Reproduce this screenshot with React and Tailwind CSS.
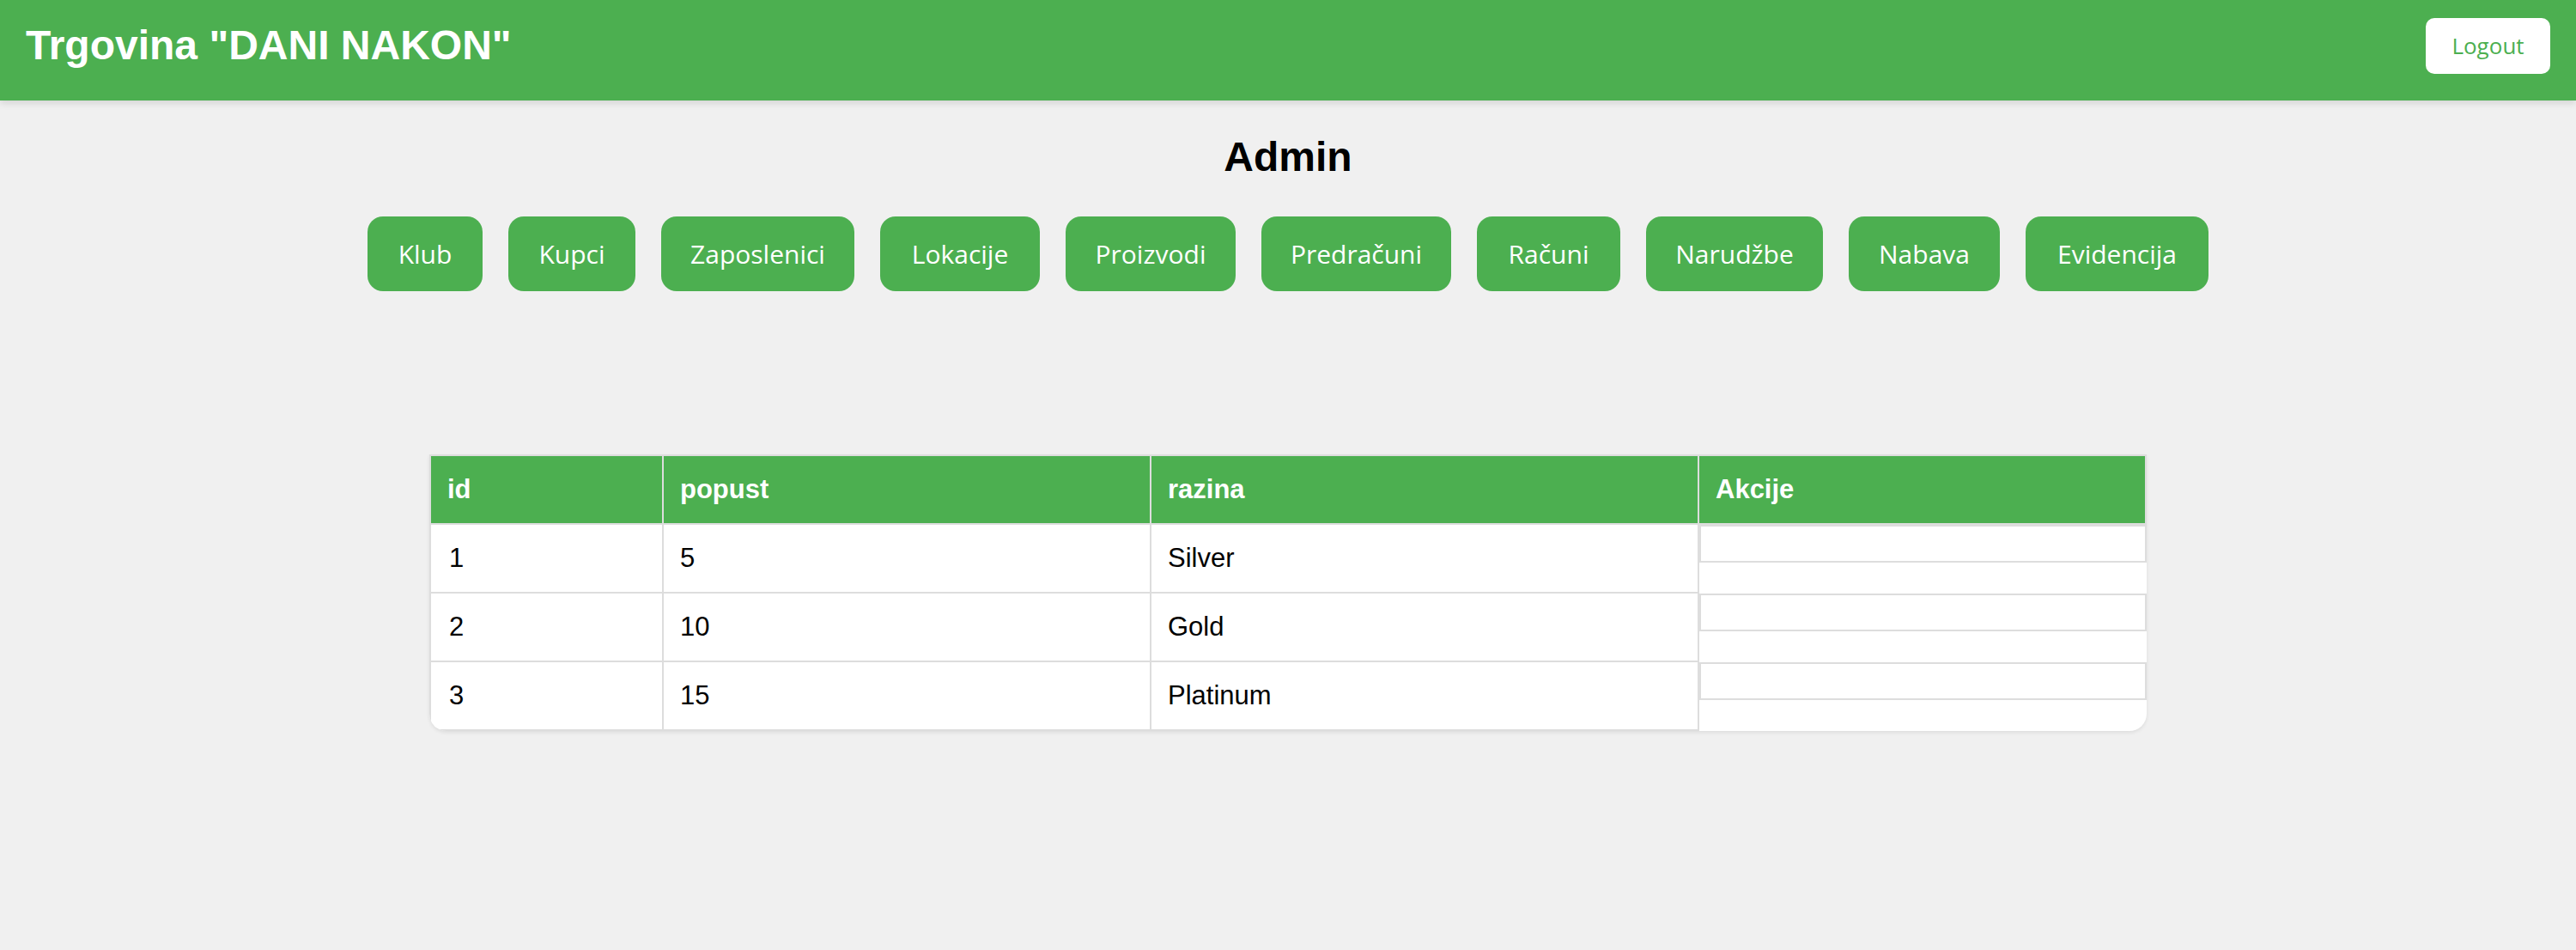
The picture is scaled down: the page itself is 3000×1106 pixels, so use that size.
import React from 'react';

const navItems = [
  { label: 'Klub', width: 'w-[134px]' },
  { label: 'Kupci', width: 'w-[148px]' },
  { label: 'Zaposlenici', width: 'w-[225px]' },
  { label: 'Lokacije', width: 'w-[186px]' },
  { label: 'Proizvodi', width: 'w-[198px]' },
  { label: 'Predračuni', width: 'w-[221px]' },
  { label: 'Računi', width: 'w-[167px]' },
  { label: 'Narudžbe', width: 'w-[206px]' },
  { label: 'Nabava', width: 'w-[176px]' },
  { label: 'Evidencija', width: 'w-[213px]' },
];

const rows = [
  { id: 1, popust: 5, razina: 'Silver' },
  { id: 2, popust: 10, razina: 'Gold' },
  { id: 3, popust: 15, razina: 'Platinum' },
];

const App = () => {
  return (
    <div className="min-h-screen bg-[#f0f0f0] font-['Liberation_Sans',Arial,sans-serif]">
      {/* top bar */}
      <header className="h-[117px] bg-[#4caf50] px-[30px] pb-[11px] flex items-center justify-between shadow-[0_3px_8px_rgba(0,0,0,0.12)] relative">
        <h1 className="text-white font-bold text-[48px] leading-none m-0">Trgovina "DANI NAKON"</h1>
        <button className="w-[145px] h-[65px] bg-white rounded-[10px] text-[#4caf50] text-[26px] font-['Open_Sans',sans-serif] flex items-center justify-center">
          Logout
        </button>
      </header>

      <main className="pt-[38px] flex flex-col items-center">
        <h2 className="text-black font-bold text-[48px] leading-[56px]">Admin</h2>

        <nav className="mt-[41px] flex justify-center gap-[30px]">
          {navItems.map((item) => (
            <button
              key={item.label}
              className={`${item.width} h-[87px] bg-[#4caf50] text-white rounded-[18px] text-[30px] font-['Open_Sans',sans-serif] flex items-center justify-center`}
            >
              {item.label}
            </button>
          ))}
        </nav>

        {/* klub table */}
        <div className="mt-[190px] w-[2000px] bg-white rounded-b-[20px] overflow-hidden shadow-[0_2px_4px_rgba(0,0,0,0.08)] text-[31px]">
          <div className="flex h-[82px] bg-[#4caf50] border-2 border-[#ddd] text-white font-bold">
            <div className="w-[271px] border-r-2 border-[#ddd] px-[19px] flex items-center">id</div>
            <div className="w-[568px] border-r-2 border-[#ddd] px-[19px] flex items-center">popust</div>
            <div className="w-[638px] border-r-2 border-[#ddd] px-[19px] flex items-center">razina</div>
            <div className="flex-1 px-[19px] flex items-center">Akcije</div>
          </div>
          <div className="border-l-2 border-[#ddd]">
            {rows.map((r) => (
              <div key={r.id} className="flex h-[80px] text-black">
                <div className="w-[271px] border-r-2 border-b-2 border-[#ddd] px-[21px] flex items-center">{r.id}</div>
                <div className="w-[568px] border-r-2 border-b-2 border-[#ddd] px-[19px] flex items-center">{r.popust}</div>
                <div className="w-[638px] border-r-2 border-b-2 border-[#ddd] px-[19px] flex items-center">{r.razina}</div>
                <div className="flex-1">
                  <div className="h-[44px] border-2 border-[#ddd] bg-white"></div>
                </div>
              </div>
            ))}
          </div>
        </div>
      </main>
    </div>
  );
};

export default App;
